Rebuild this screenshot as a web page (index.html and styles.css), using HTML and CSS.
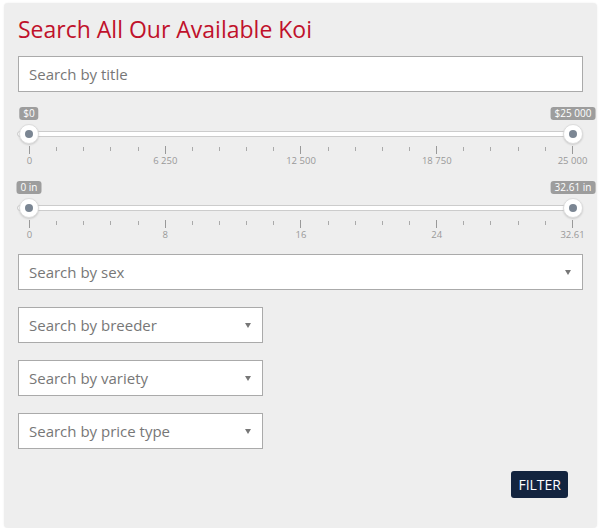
FILE: index.html
```html
<!DOCTYPE html>
<html lang="en">
  <head>
    <meta charset="UTF-8" />
    <meta name="viewport" content="width=device-width, initial-scale=1.0" />
    <title>Search Koi</title>
    <link rel="stylesheet" href="styles.css">
  </head>
  <body>
    <div class="panel">
      <h2>Search All Our Available Koi</h2>
      <form id="searchForm">
        <input type="text" class="field" name="title" placeholder="Search by title" />

        <div class="slider">
          <span class="badge badge-from">$0</span>
          <span class="badge badge-to">$25 000</span>
          <div class="track"></div>
          <span class="handle handle-from"></span>
          <span class="handle handle-to"></span>
          <div class="ticks">
            <i class="big"></i><i></i><i></i><i></i><i></i>
            <i class="big"></i><i></i><i></i><i></i><i></i>
            <i class="big"></i><i></i><i></i><i></i><i></i>
            <i class="big"></i><i></i><i></i><i></i><i></i>
            <i class="big"></i>
          </div>
          <div class="tick-labels">
            <span>0</span><span>6 250</span><span>12 500</span><span>18 750</span><span>25 000</span>
          </div>
        </div>

        <div class="slider">
          <span class="badge badge-from">0 in</span>
          <span class="badge badge-to">32.61 in</span>
          <div class="track"></div>
          <span class="handle handle-from"></span>
          <span class="handle handle-to"></span>
          <div class="ticks">
            <i class="big"></i><i></i><i></i><i></i><i></i>
            <i class="big"></i><i></i><i></i><i></i><i></i>
            <i class="big"></i><i></i><i></i><i></i><i></i>
            <i class="big"></i><i></i><i></i><i></i><i></i>
            <i class="big"></i>
          </div>
          <div class="tick-labels">
            <span>0</span><span>8</span><span>16</span><span>24</span><span>32.61</span>
          </div>
        </div>

        <div class="select-wrap wide">
          <select class="field" name="sex">
            <option>Search by sex</option>
          </select>
        </div>
        <div class="select-wrap">
          <select class="field" name="breeder">
            <option>Search by breeder</option>
          </select>
        </div>
        <div class="select-wrap">
          <select class="field" name="variety">
            <option>Search by variety</option>
          </select>
        </div>
        <div class="select-wrap">
          <select class="field" name="price_type">
            <option>Search by price type</option>
          </select>
        </div>

        <div class="actions">
          <button type="submit" class="btn-filter">FILTER</button>
        </div>
      </form>
    </div>
  </body>
</html>
```

FILE: styles.css
```css
body {
  margin: 0;
  padding: 0;
  background-color: #fff;
  font-family: "Open Sans", Arial, sans-serif;
}
.panel {
  width: 593px;
  box-sizing: border-box;
  margin: 3px 0 0 4px;
  padding: 10px 14px 30px 14px;
  background-color: #eee;
  border-radius: 4px;
  box-shadow: 0 0 2px rgba(0, 0, 0, 0.08);
}
h2 {
  margin: 0 0 11px 0;
  font-size: 23px;
  font-weight: 400;
  line-height: 32px;
  color: #c0112b;
}
.field {
  display: block;
  width: 100%;
  height: 36px;
  box-sizing: border-box;
  padding: 0 10px;
  border: 1px solid #aaa;
  border-radius: 0;
  background-color: #fff;
  font-family: "Open Sans", Arial, sans-serif;
  font-size: 15px;
  color: #777;
  outline: none;
}
.field::placeholder {
  color: #777;
}
select.field {
  appearance: none;
  -webkit-appearance: none;
}

/* range sliders */
.slider {
  position: relative;
  padding-top: 27px;
  margin: 12px 0 11px 0;
}
.slider + .slider {
  margin-top: 0;
}
.badge {
  position: absolute;
  top: 3px;
  height: 13px;
  padding: 0 4px;
  background-color: #9d9d9d;
  border-radius: 3px;
  color: #fff;
  font-size: 10px;
  line-height: 13px;
  white-space: nowrap;
  transform: translateX(-50%);
}
.badge-from {
  left: 11px;
}
.badge-to {
  left: calc(100% - 10px);
}
.track {
  height: 6px;
  box-sizing: border-box;
  margin-left: -1px;
  background-color: #fff;
  border: 1px solid #ccc;
  border-radius: 3px;
}
.handle {
  position: absolute;
  top: 20px;
  width: 20px;
  height: 20px;
  box-sizing: border-box;
  margin-left: -10px;
  background-color: #fff;
  border: 1px solid #ddd;
  border-radius: 50%;
  box-shadow: 0 1px 2px rgba(0, 0, 0, 0.15);
}
.handle::after {
  content: "";
  position: absolute;
  top: 5px;
  left: 5px;
  width: 8px;
  height: 8px;
  border-radius: 50%;
  background-color: #7b8693;
}
.handle-from {
  left: 11px;
}
.handle-to {
  left: calc(100% - 10px);
}
.ticks {
  display: flex;
  justify-content: space-between;
  align-items: flex-start;
  height: 8px;
  margin: 9px 10px 0 11px;
}
.ticks i {
  display: block;
  width: 1px;
  height: 4px;
  margin-top: 1px;
  background-color: #aaa;
}
.ticks i.big {
  height: 8px;
  margin-top: 0;
  background-color: #999;
}
.tick-labels {
  display: flex;
  justify-content: space-between;
  margin: 1px 10px 0 11px;
  height: 12px;
}
.tick-labels span {
  width: 1px;
  display: flex;
  justify-content: center;
  font-size: 9.5px;
  line-height: 12px;
  color: #999;
  white-space: nowrap;
}

/* selects */
.select-wrap {
  position: relative;
  width: 245px;
  margin-bottom: 17px;
}
.select-wrap.wide {
  width: 100%;
  margin-top: 13px;
}
.select-wrap::after {
  content: "";
  position: absolute;
  right: 12px;
  top: 16px;
  border-left: 3.5px solid transparent;
  border-right: 3.5px solid transparent;
  border-top: 5px solid #777;
  pointer-events: none;
}
.actions {
  display: flex;
  justify-content: flex-end;
  padding-top: 5px;
  padding-right: 15px;
}
.btn-filter {
  height: 27px;
  padding: 0 7px;
  background-color: #13243f;
  color: #fff;
  border: none;
  border-radius: 3px;
  font-family: "Open Sans", Arial, sans-serif;
  font-size: 14px;
  cursor: pointer;
}
```
